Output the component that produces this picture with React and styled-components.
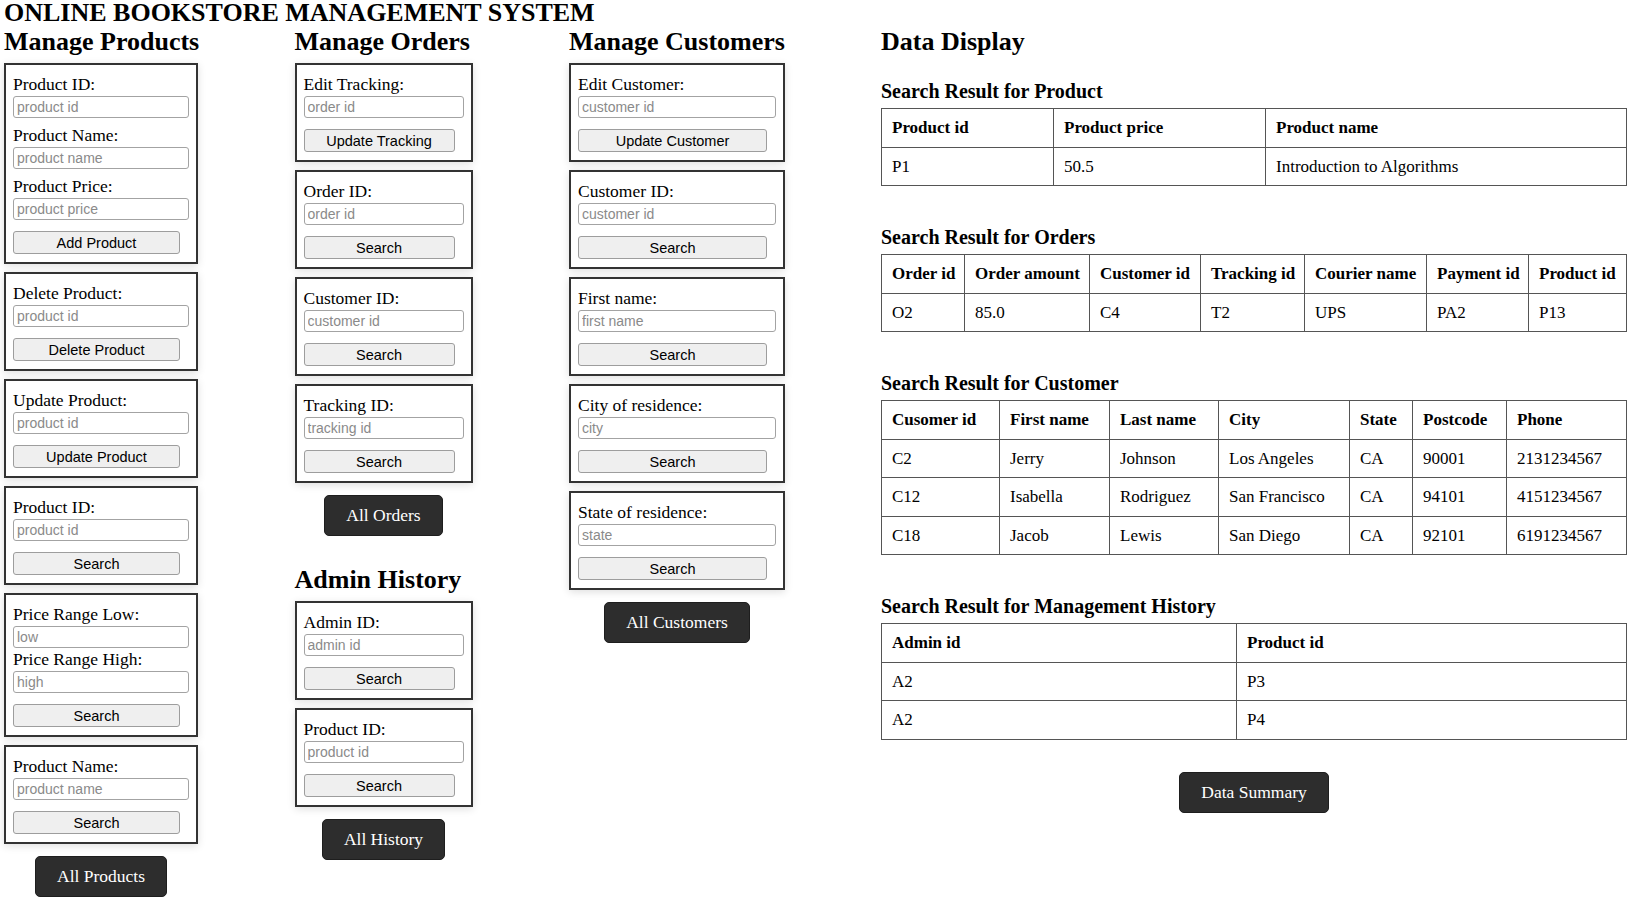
import React from 'react';
import styled, { createGlobalStyle } from 'styled-components';

const GlobalStyle = createGlobalStyle`
    html, body {
        margin: 0;
        padding: 0;
        background: #fff;
        overflow: hidden;
    }

    body {
        font-family: "Liberation Serif", "Times New Roman", serif;
        color: #000;
    }
`;

const Page = styled.div`
    padding: 0 10px 0 4px;
`;

const Title = styled.h1`
    margin: 0;
    font-size: 26px;
    line-height: 26px;
    font-weight: bold;
`;

const Columns = styled.div`
    display: grid;
    grid-template-columns: 290.5px 274.5px 312px 1fr;
    align-items: start;
`;

const Column = styled.div`
    display: flex;
    flex-direction: column;
    align-items: flex-start;
    width: ${({ $w }) => ($w ? `${$w}px` : 'auto')};
`;

const Heading = styled.h2`
    margin: ${({ $gap }) => ($gap || 0) + 1}px 0 6px;
    font-size: 26px;
    line-height: 30px;
    font-weight: bold;
    white-space: nowrap;
`;

const Box = styled.div`
    width: 100%;
    box-sizing: border-box;
    border: 2px solid #333;
    padding: 8px 7px;
    margin-bottom: 8px;
    background: #fff;
    box-shadow: 0 2px 8px rgba(0, 0, 0, 0.13);
`;

const Label = styled.label`
    display: block;
    font-size: 17.5px;
    line-height: 22px;
    margin: ${({ $tight }) => ($tight ? 0 : 6)}px 0 1px;

    &:first-child {
        margin-top: 0;
    }
`;

const Input = styled.input`
    display: block;
    width: 100%;
    height: 22px;
    box-sizing: border-box;
    margin: 0;
    padding: 0 3px;
    border: 1px solid #a3a3a3;
    border-radius: 3px;
    font-family: "Liberation Sans", Arial, sans-serif;
    font-size: 14px;
    color: #000;

    &::placeholder {
        color: #8a8a8a;
    }
`;

const LightButton = styled.button`
    display: block;
    width: calc(100% - 9px);
    height: 23px;
    margin-top: 11px;
    padding: 0;
    background: #efefef;
    border: 1px solid #9d9d9d;
    border-radius: 3px;
    font-family: "Liberation Sans", Arial, sans-serif;
    font-size: 14.5px;
    color: #000;
`;

const DarkButton = styled.button`
    align-self: center;
    height: 41px;
    margin-top: ${({ $gap }) => $gap || 4}px;
    padding: 0 21px;
    background: #2d2d2d;
    color: #fff;
    border: 1px solid #1e1e1e;
    border-radius: 5px;
    font-family: "Liberation Serif", "Times New Roman", serif;
    font-size: 17.5px;
`;

const DataColumn = styled.div`
    display: flex;
    flex-direction: column;
`;

const SectionTitle = styled.h3`
    margin: ${({ $first }) => ($first ? 17 : 40)}px 0 6px;
    font-size: 20px;
    line-height: 22px;
    font-weight: bold;
`;

const Table = styled.table`
    width: 100%;
    border-collapse: collapse;
    table-layout: fixed;
    font-size: 17px;

    th, td {
        border: 1px solid #555;
        padding: 9px 10px;
        line-height: 19.5px;
        text-align: left;
        white-space: nowrap;
    }

    th {
        font-weight: bold;
    }
`;

const Col = styled.col`
    width: ${({ $w }) => $w}px;
`;

const FormBox = ({ fields, action, tight }) => (
    <Box>
        {fields.map(([label, placeholder], i) => (
            <React.Fragment key={label + i}>
                <Label $tight={tight && i > 0}>{label}</Label>
                <Input placeholder={placeholder} />
            </React.Fragment>
        ))}
        <LightButton>{action}</LightButton>
    </Box>
);

const ResultTable = ({ title, first, widths, head, rows }) => (
    <>
        <SectionTitle $first={first}>{title}</SectionTitle>
        <Table>
            <colgroup>
                {widths.map((w, i) => <Col key={i} $w={w} />)}
            </colgroup>
            <thead>
                <tr>
                    {head.map((h) => <th key={h}>{h}</th>)}
                </tr>
            </thead>
            <tbody>
                {rows.map((row, i) => (
                    <tr key={i}>
                        {row.map((cell, j) => <td key={j}>{cell}</td>)}
                    </tr>
                ))}
            </tbody>
        </Table>
    </>
);

export default function App() {
    return (
        <Page>
            <GlobalStyle />
            <Title>ONLINE BOOKSTORE MANAGEMENT SYSTEM</Title>

            <Columns>
                <Column $w={194}>
                    <Heading>Manage Products</Heading>
                    <FormBox
                        fields={[
                            ['Product ID:', 'product id'],
                            ['Product Name:', 'product name'],
                            ['Product Price:', 'product price'],
                        ]}
                        action='Add Product'
                    />
                    <FormBox fields={[['Delete Product:', 'product id']]} action='Delete Product' />
                    <FormBox fields={[['Update Product:', 'product id']]} action='Update Product' />
                    <FormBox fields={[['Product ID:', 'product id']]} action='Search' />
                    <FormBox
                        tight
                        fields={[
                            ['Price Range Low:', 'low'],
                            ['Price Range High:', 'high'],
                        ]}
                        action='Search'
                    />
                    <FormBox fields={[['Product Name:', 'product name']]} action='Search' />
                    <DarkButton>All Products</DarkButton>
                </Column>

                <Column $w={178}>
                    <Heading>Manage Orders</Heading>
                    <FormBox fields={[['Edit Tracking:', 'order id']]} action='Update Tracking' />
                    <FormBox fields={[['Order ID:', 'order id']]} action='Search' />
                    <FormBox fields={[['Customer ID:', 'customer id']]} action='Search' />
                    <FormBox fields={[['Tracking ID:', 'tracking id']]} action='Search' />
                    <DarkButton>All Orders</DarkButton>

                    <Heading $gap={28}>Admin History</Heading>
                    <FormBox fields={[['Admin ID:', 'admin id']]} action='Search' />
                    <FormBox fields={[['Product ID:', 'product id']]} action='Search' />
                    <DarkButton>All History</DarkButton>
                </Column>

                <Column $w={216}>
                    <Heading>Manage Customers</Heading>
                    <FormBox fields={[['Edit Customer:', 'customer id']]} action='Update Customer' />
                    <FormBox fields={[['Customer ID:', 'customer id']]} action='Search' />
                    <FormBox fields={[['First name:', 'first name']]} action='Search' />
                    <FormBox fields={[['City of residence:', 'city']]} action='Search' />
                    <FormBox fields={[['State of residence:', 'state']]} action='Search' />
                    <DarkButton>All Customers</DarkButton>
                </Column>

                <DataColumn>
                    <Heading>Data Display</Heading>

                    <ResultTable
                        first
                        title='Search Result for Product'
                        widths={[172, 212, 361]}
                        head={['Product id', 'Product price', 'Product name']}
                        rows={[['P1', '50.5', 'Introduction to Algorithms']]}
                    />

                    <ResultTable
                        title='Search Result for Orders'
                        widths={[83, 125, 111, 104, 122, 102, 98]}
                        head={['Order id', 'Order amount', 'Customer id', 'Tracking id', 'Courier name', 'Payment id', 'Product id']}
                        rows={[['O2', '85.0', 'C4', 'T2', 'UPS', 'PA2', 'P13']]}
                    />

                    <ResultTable
                        title='Search Result for Customer'
                        widths={[118, 110, 109, 131, 63, 94, 120]}
                        head={['Cusomer id', 'First name', 'Last name', 'City', 'State', 'Postcode', 'Phone']}
                        rows={[
                            ['C2', 'Jerry', 'Johnson', 'Los Angeles', 'CA', '90001', '2131234567'],
                            ['C12', 'Isabella', 'Rodriguez', 'San Francisco', 'CA', '94101', '4151234567'],
                            ['C18', 'Jacob', 'Lewis', 'San Diego', 'CA', '92101', '6191234567'],
                        ]}
                    />

                    <ResultTable
                        title='Search Result for Management History'
                        widths={[355, 390]}
                        head={['Admin id', 'Product id']}
                        rows={[
                            ['A2', 'P3'],
                            ['A2', 'P4'],
                        ]}
                    />

                    <DarkButton $gap={32}>Data Summary</DarkButton>
                </DataColumn>
            </Columns>
        </Page>
    );
}
